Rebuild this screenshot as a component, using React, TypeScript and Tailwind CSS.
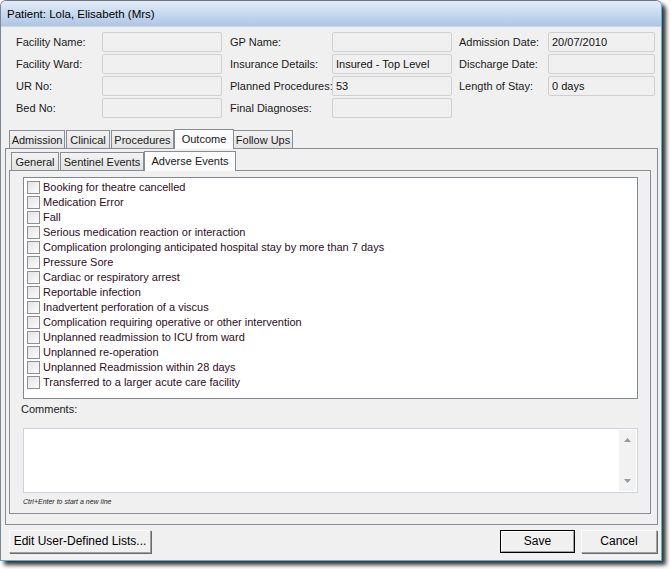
import React from "react";

const events = [
  "Booking for theatre cancelled",
  "Medication Error",
  "Fall",
  "Serious medication reaction or interaction",
  "Complication prolonging anticipated hospital stay by more than 7 days",
  "Pressure Sore",
  "Cardiac or respiratory arrest",
  "Reportable infection",
  "Inadvertent perforation of a viscus",
  "Complication requiring operative or other intervention",
  "Unplanned readmission to ICU from ward",
  "Unplanned re-operation",
  "Unplanned Readmission within 28 days",
  "Transferred to a larger acute care facility",
];

const Field = ({ value = "", w }: { value?: string; w: string }) => (
  <div
    className={`${w} h-[20px] border border-[#cfcfcf] bg-[#f0f0f0] rounded-[2px] pl-[3px] flex items-center text-[#111]`}
  >
    {value}
  </div>
);

const Tab = ({ label, active, w }: { label: string; active?: boolean; w: string }) =>
  active ? (
    <div
      className={`${w} h-[20px] -mb-px -mx-px relative z-10 border border-b-0 border-[#898c95] bg-[#fbfbfb] flex items-center justify-center`}
    >
      {label}
    </div>
  ) : (
    <div
      className={`${w} h-[18px] border border-b-0 border-[#898c95] bg-gradient-to-b from-[#f3f3f3] to-[#e3e3e3] flex items-center justify-center mr-px pt-px`}
    >
      {label}
    </div>
  );

const Arrow = ({ up }: { up?: boolean }) => (
  <svg width="7" height="4" viewBox="0 0 7 4">
    <path d={up ? "M0 4 L3.5 0 L7 4 Z" : "M0 0 L3.5 4 L7 0 Z"} fill="#9a9a9a" />
  </svg>
);

export default function App() {
  return (
    <div className="w-[671px] h-[569px] bg-white font-['Liberation_Sans',Arial,sans-serif] text-[11px] text-[#1a1a1a]">
      <div className="w-[662px] h-[561px] flex flex-col rounded-t-[6px] border border-t-[#6f7680] border-l-[#7d8692] border-r-[#4fb0dc] border-b-[#4fb0dc] shadow-[4px_4px_4px_rgba(0,0,0,0.8)] bg-[#f0f0f0] overflow-hidden">
        {/* title bar */}
        <div className="h-[26px] shrink-0 bg-gradient-to-b from-[#e4edf8] to-[#adc5e4] border-b border-[#c8d6e8] flex items-center pl-[6px] pt-[2px] text-[11.5px] text-black">
          Patient: Lola, Elisabeth (Mrs)
        </div>

        <div className="flex-1 flex flex-col pl-[4px]">
          {/* header fields */}
          <div className="pt-[5px] pl-[11px] flex flex-col gap-[2px]">
            <div className="flex items-center">
              <div className="w-[86px]">Facility Name:</div>
              <Field w="w-[120px]" />
              <div className="w-[102px] ml-[8px]">GP Name:</div>
              <Field w="w-[120px]" />
              <div className="w-[89px] ml-[7px]">Admission Date:</div>
              <Field w="w-[107px]" value="20/07/2010" />
            </div>
            <div className="flex items-center">
              <div className="w-[86px]">Facility Ward:</div>
              <Field w="w-[120px]" />
              <div className="w-[102px] ml-[8px]">Insurance Details:</div>
              <Field w="w-[120px]" value="Insured - Top Level" />
              <div className="w-[89px] ml-[7px]">Discharge Date:</div>
              <Field w="w-[107px]" />
            </div>
            <div className="flex items-center">
              <div className="w-[86px]">UR No:</div>
              <Field w="w-[120px]" />
              <div className="w-[102px] ml-[8px] whitespace-nowrap">Planned Procedures:</div>
              <Field w="w-[120px]" value="53" />
              <div className="w-[89px] ml-[7px]">Length of Stay:</div>
              <Field w="w-[107px]" value="0 days" />
            </div>
            <div className="flex items-center">
              <div className="w-[86px]">Bed No:</div>
              <Field w="w-[120px]" />
              <div className="w-[102px] ml-[8px]">Final Diagnoses:</div>
              <Field w="w-[120px]" />
            </div>
          </div>

          {/* main tabs */}
          <div className="mt-[10px] pl-[4px] h-[20px] flex items-end">
            <Tab label="Admission" w="w-[56px]" />
            <Tab label="Clinical" w="w-[44px]" />
            <Tab label="Procedures" w="w-[63px]" />
            <Tab label="Outcome" active w="w-[60px]" />
            <Tab label="Follow Ups" w="w-[60px]" />
          </div>

          <div className="w-[653px] h-[377px] border border-[#898c95] flex flex-col pl-[3px] pt-px">
            {/* sub tabs */}
            <div className="pl-[2px] h-[20px] flex items-end">
              <Tab label="General" w="w-[48px]" />
              <Tab label="Sentinel Events" w="w-[84px]" />
              <Tab label="Adverse Events" active w="w-[92px]" />
            </div>

            <div className="w-[642px] h-[344px] border border-[#898c95] flex flex-col pl-[13px] pt-[6px]">
              <div className="w-[615px] h-[222px] border border-[#828790] bg-white pl-[3px] pt-[2px] flex flex-col">
                {events.map((e) => (
                  <div key={e} className="h-[15px] flex items-center gap-[3px] text-[#2e0c1c]">
                    <div className="w-[13px] h-[13px] border border-[#8e8f8f] bg-gradient-to-br from-[#e4e4e4] to-[#fbfbfb]" />
                    <span>{e}</span>
                  </div>
                ))}
              </div>

              <div className="mt-[3px] -ml-[2px] h-[14px] flex items-center">Comments:</div>

              <div className="mt-[12px] w-[615px] h-[65px] border border-[#cdd3da] bg-white flex justify-end p-px">
                <div className="w-[17px] h-full bg-[#f2f2f2] flex flex-col items-center justify-between py-[8px]">
                  <Arrow up />
                  <Arrow />
                </div>
              </div>

              <div className="mt-[4px] h-[9px] text-[7px] italic leading-[9px] text-[#222]">
                Ctrl+Enter to start a new line
              </div>
            </div>
          </div>

          {/* buttons */}
          <div className="mt-[5px] flex items-center pl-[4px] pr-[4px]">
            <button className="w-[142px] h-[23px] pb-[2px] bg-[#f0f0f0] border border-t-white border-l-white border-r-[#a0a0a0] border-b-[#a0a0a0] shadow-[1px_1px_0_#696969] text-[12px] text-black">
              Edit User-Defined Lists...
            </button>
            <div className="flex-1" />
            <button className="w-[75px] h-[23px] border border-black bg-[#f0f0f0] text-[12px] text-black flex">
              <span className="flex-1 flex items-center justify-center pb-px border border-t-white border-l-white border-r-[#a0a0a0] border-b-[#a0a0a0]">
                Save
              </span>
            </button>
            <button className="ml-[6px] w-[76px] h-[23px] pb-[2px] bg-[#f0f0f0] border border-t-white border-l-white border-r-[#a0a0a0] border-b-[#a0a0a0] shadow-[1px_1px_0_#696969] text-[12px] text-black">
              Cancel
            </button>
          </div>
        </div>
      </div>
    </div>
  );
}
